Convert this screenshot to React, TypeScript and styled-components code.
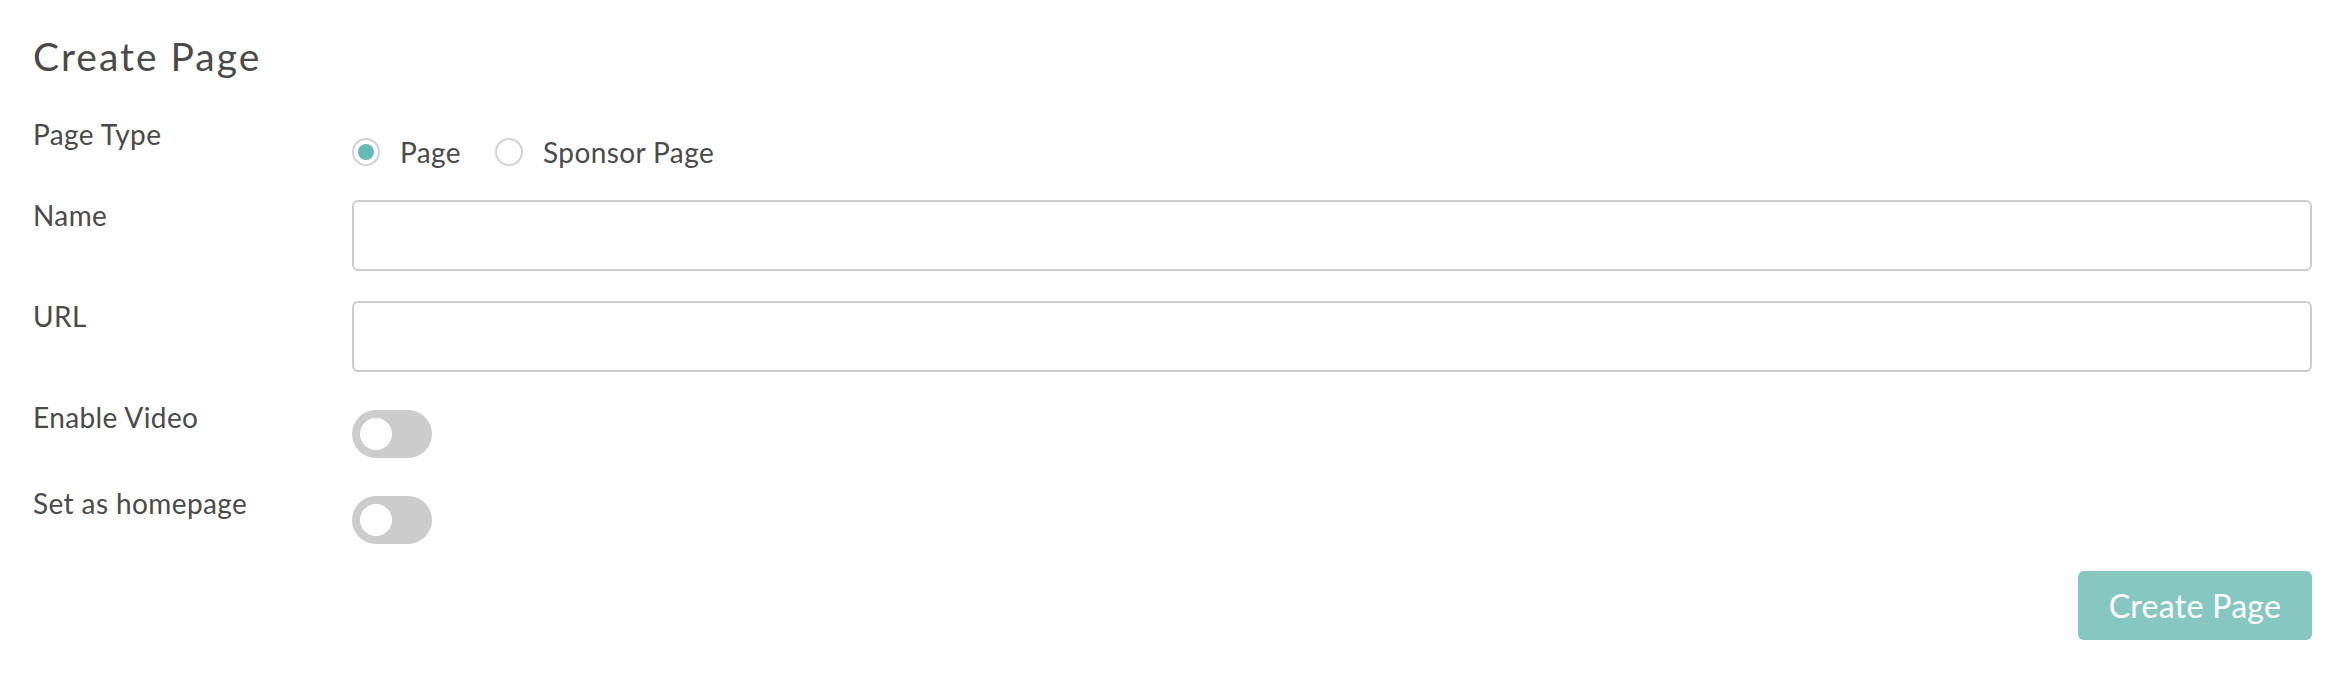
import React, { useState } from "react";
import styled, { createGlobalStyle } from "styled-components";

const Global = createGlobalStyle`
  html, body { margin: 0; padding: 0; background: #ffffff; }
  body { font-family: Lato, "Open Sans", sans-serif; color: #4a4a4a; }
  * { box-sizing: border-box; }
`;

const Page = styled.div`
  padding: 33px 34px 0 33px;
  display: flex;
  flex-direction: column;
`;

const Title = styled.h1`
  margin: 0 0 39px 0;
  font-size: 39px;
  font-weight: 400;
  line-height: 1.2;
  letter-spacing: 2px;
  color: #4a4a4a;
`;

const Form = styled.form`
  display: flex;
  flex-direction: column;
  gap: 30px;
`;

const Row = styled.div`
  display: grid;
  grid-template-columns: 319px 1fr;
  align-items: start;
`;

const Label = styled.label`
  font-size: 28px;
  line-height: 30px;
  letter-spacing: 0.4px;
  color: #4a4a4a;
`;

const RadioGroup = styled.div`
  display: flex;
  align-items: center;
  margin: 18px 0 3px 0;
  height: 30px;
`;

const RadioOption = styled.label`
  display: flex;
  align-items: center;
  gap: 20px;
  margin-right: 34px;
  font-size: 28px;
  line-height: 30px;
  letter-spacing: 0.4px;
  color: #4a4a4a;
  cursor: pointer;
`;

const RadioCircle = styled.span<{ $checked: boolean }>`
  width: 28px;
  height: 28px;
  border-radius: 50%;
  border: 2px solid #d2d2d2;
  display: flex;
  align-items: center;
  justify-content: center;
  background: #fff;
  &::after {
    content: "";
    width: 16px;
    height: 16px;
    border-radius: 50%;
    background: ${(p) => (p.$checked ? "#66bab3" : "transparent")};
  }
`;

const TextInput = styled.input`
  width: 100%;
  height: 71px;
  border: 2px solid #cdcdcd;
  border-radius: 6px;
  padding: 0 16px;
  font-family: Lato, sans-serif;
  font-size: 28px;
  color: #4a4a4a;
  outline: none;
`;

const Toggle = styled.button<{ $on: boolean }>`
  margin-top: 8px;
  width: 80px;
  height: 48px;
  border-radius: 24px;
  border: none;
  padding: 0 8px;
  background: ${(p) => (p.$on ? "#66bab3" : "#cccccc")};
  display: flex;
  align-items: center;
  justify-content: ${(p) => (p.$on ? "flex-end" : "flex-start")};
  cursor: pointer;
  &::after {
    content: "";
    width: 32px;
    height: 32px;
    border-radius: 50%;
    background: #ffffff;
  }
`;

const Actions = styled.div`
  display: flex;
  justify-content: flex-end;
  margin-top: -3px;
`;

const SubmitButton = styled.button`
  width: 234px;
  height: 69px;
  border: none;
  border-radius: 6px;
  background: #87c7c2;
  color: #ffffff;
  font-family: Lato, sans-serif;
  font-size: 32px;
  letter-spacing: 0.3px;
  box-shadow: 0 2px 4px rgba(0, 0, 0, 0.08);
  cursor: pointer;
`;

export default function App() {
  const [type, setType] = useState<"page" | "sponsor">("page");
  const [video, setVideo] = useState(false);
  const [home, setHome] = useState(false);

  return (
    <>
      <Global />
      <Page>
        <Title>Create Page</Title>
        <Form onSubmit={(e) => e.preventDefault()}>
          <Row>
            <Label>Page Type</Label>
            <RadioGroup>
              <RadioOption onClick={() => setType("page")}>
                <RadioCircle $checked={type === "page"} />
                Page
              </RadioOption>
              <RadioOption onClick={() => setType("sponsor")}>
                <RadioCircle $checked={type === "sponsor"} />
                Sponsor Page
              </RadioOption>
            </RadioGroup>
          </Row>
          <Row>
            <Label>Name</Label>
            <TextInput type="text" />
          </Row>
          <Row>
            <Label>URL</Label>
            <TextInput type="text" />
          </Row>
          <Row>
            <Label>Enable Video</Label>
            <div>
              <Toggle type="button" $on={video} onClick={() => setVideo(!video)} />
            </div>
          </Row>
          <Row>
            <Label>Set as homepage</Label>
            <div>
              <Toggle type="button" $on={home} onClick={() => setHome(!home)} />
            </div>
          </Row>
          <Actions>
            <SubmitButton type="submit">Create Page</SubmitButton>
          </Actions>
        </Form>
      </Page>
    </>
  );
}
